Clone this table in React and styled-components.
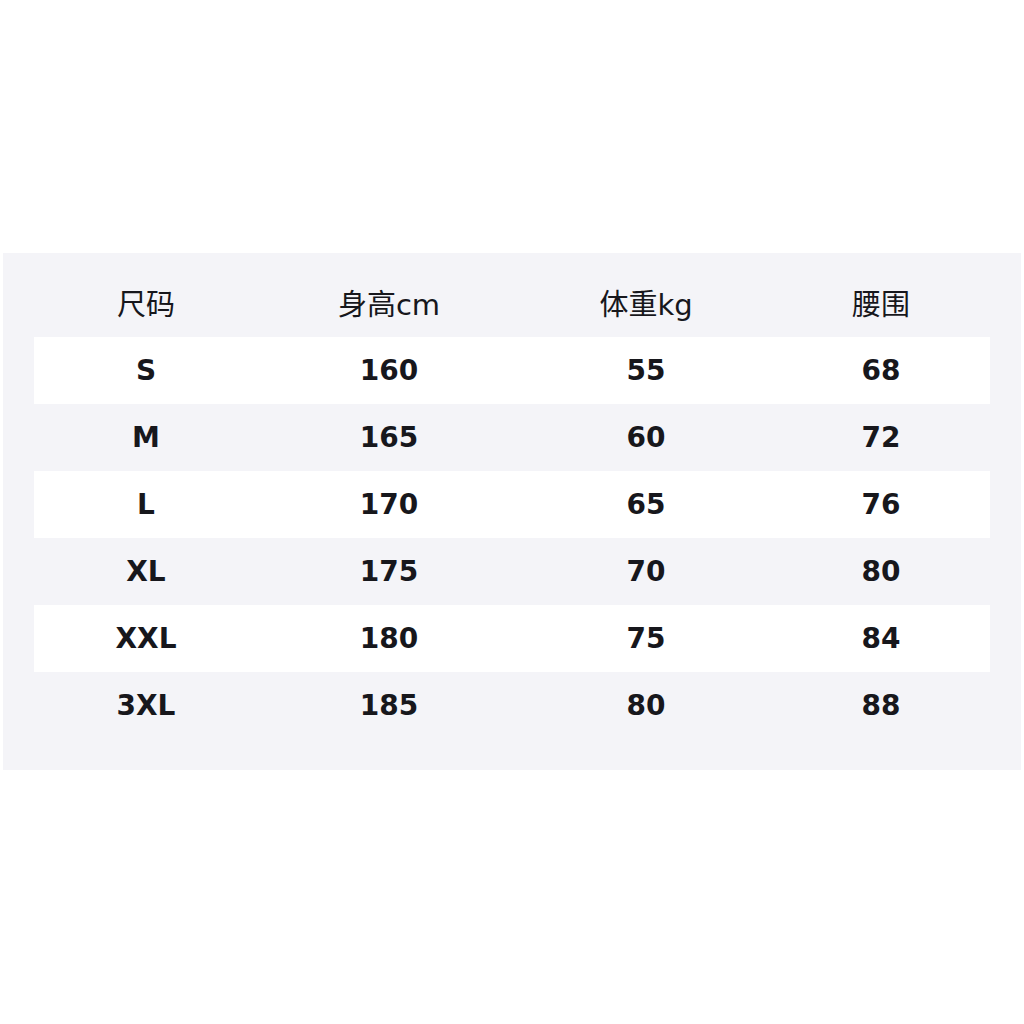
import React from "react";
import styled, { createGlobalStyle } from "styled-components";

const GlobalStyle = createGlobalStyle`
  body {
    margin: 0;
    background: #ffffff;
    font-family: "DejaVu Sans", "Noto Sans CJK SC", sans-serif;
  }
`;

const Page = styled.div`
  width: 1024px;
  height: 1024px;
  display: flex;
  align-items: center;
  padding-left: 3px;
  box-sizing: border-box;
`;

const Panel = styled.div`
  width: 1018px;
  margin-top: -1px;
  background: #f4f4f8;
  padding: 17px 31px 31px;
  box-sizing: border-box;
`;

const Row = styled.div`
  display: grid;
  grid-template-columns: 224px 262px 252px 218px;
  height: 67px;
  align-items: center;
  background: ${(props) => (props.striped ? "#ffffff" : "transparent")};
`;

const HeadRow = styled(Row)`
  padding-bottom: 4px;
  box-sizing: border-box;
`;

const Cell = styled.div`
  text-align: center;
  color: #17171c;
  font-size: ${(props) => (props.head ? "29px" : "28px")};
  font-weight: ${(props) => (props.head ? 400 : 700)};
  font-family: "DejaVu Sans", "Noto Sans CJK SC", sans-serif;
`;

const headers = ["尺码", "身高cm", "体重kg", "腰围"];

const rows = [
  ["S", "160", "55", "68"],
  ["M", "165", "60", "72"],
  ["L", "170", "65", "76"],
  ["XL", "175", "70", "80"],
  ["XXL", "180", "75", "84"],
  ["3XL", "185", "80", "88"],
];

const App = () => (
  <>
    <GlobalStyle />
    <Page>
      <Panel>
        <HeadRow>
          {headers.map((h) => (
            <Cell head key={h}>
              {h}
            </Cell>
          ))}
        </HeadRow>
        {rows.map((r, i) => (
          <Row key={r[0]} striped={i % 2 === 0}>
            {r.map((v, j) => (
              <Cell key={j}>{v}</Cell>
            ))}
          </Row>
        ))}
      </Panel>
    </Page>
  </>
);

export default App;
